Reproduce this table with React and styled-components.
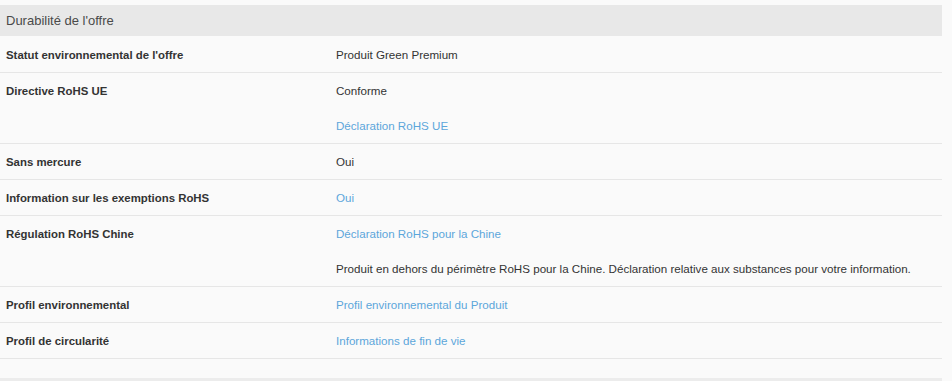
import React from "react";
import styled, { createGlobalStyle } from "styled-components";

const GlobalStyle = createGlobalStyle`
  body {
    margin: 0;
    background: #fafafa;
    font-family: "Liberation Sans", Arial, sans-serif;
  }
`;

const Wrapper = styled.div`
  width: 942px;
  padding-top: 5px;
`;

const SectionTitle = styled.div`
  height: 31px;
  margin-bottom: 1px;
  display: flex;
  align-items: center;
  padding-left: 6px;
  background: #e8e8e8;
  color: #4a4a4a;
  font-size: 13px;
`;

const Row = styled.div`
  display: grid;
  grid-template-columns: 330px 1fr;
  border-bottom: 1px solid #e6e6e6;
`;

const Label = styled.div`
  padding-left: 6px;
  height: 35px;
  display: flex;
  align-items: center;
  font-size: 11.4px;
  font-weight: bold;
  color: #333;
`;

const Values = styled.div`
  display: flex;
  flex-direction: column;
`;

const Value = styled.div`
  height: 35px;
  display: flex;
  align-items: center;
  padding-left: 6px;
  font-size: 11.6px;
  color: ${(p) => (p.$link ? "#5ca6da" : "#333")};
`;

const NextSection = styled.div`
  margin-top: 19px;
  height: 4px;
  background: #ececec;
`;

const rows = [
  { label: "Statut environnemental de l'offre", values: [{ text: "Produit Green Premium" }] },
  {
    label: "Directive RoHS UE",
    values: [{ text: "Conforme" }, { text: "Déclaration RoHS UE", link: true }],
  },
  { label: "Sans mercure", values: [{ text: "Oui" }] },
  { label: "Information sur les exemptions RoHS", values: [{ text: "Oui", link: true }] },
  {
    label: "Régulation RoHS Chine",
    values: [
      { text: "Déclaration RoHS pour la Chine", link: true },
      {
        text: "Produit en dehors du périmètre RoHS pour la Chine. Déclaration relative aux substances pour votre information.",
      },
    ],
  },
  { label: "Profil environnemental", values: [{ text: "Profil environnemental du Produit", link: true }] },
  { label: "Profil de circularité", values: [{ text: "Informations de fin de vie", link: true }] },
];

export default function App() {
  return (
    <>
      <GlobalStyle />
      <Wrapper>
        <SectionTitle>Durabilité de l'offre</SectionTitle>
        {rows.map((r) => (
          <Row key={r.label}>
            <Label>{r.label}</Label>
            <Values>
              {r.values.map((v, i) => (
                <Value key={i} $link={v.link}>
                  {v.text}
                </Value>
              ))}
            </Values>
          </Row>
        ))}
        <NextSection />
      </Wrapper>
    </>
  );
}
